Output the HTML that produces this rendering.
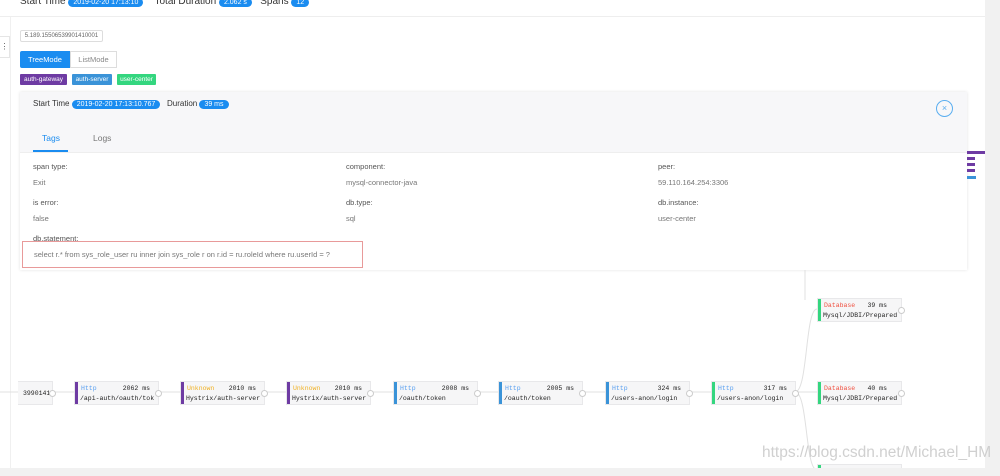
<!DOCTYPE html>
<html style="overflow:hidden;width:1000px;height:476px"><head><meta charset="utf-8"><style>
body{margin:0;width:1000px;height:476px;overflow:hidden;background:#fff;font-family:"Liberation Sans",sans-serif;position:relative;color:#333}
.a{position:absolute}
.pill{background:#1a8cf0;color:#fff;border-radius:8px;font-size:7px;padding:1px 5px}
.node{position:absolute;width:83px;height:22px;background:#f6f6f7;border:1px solid #e8e8ea;font-family:"Liberation Mono",monospace;font-size:6.5px}
.node .bar{position:absolute;left:0;top:0;width:3px;height:22px}
.node .t{position:absolute;left:6px;top:3px}
.node .ms{position:absolute;right:8px;top:3px;color:#222}
.node .p{position:absolute;left:5px;top:13px;color:#222}
.node .c{position:absolute;right:-4px;top:8px;width:5px;height:5px;border:1px solid #ccc;border-radius:50%;background:#fff}
.lbl{font-size:7.5px;color:#555}
.val{font-size:7.5px;color:#777}
</style></head><body>
<div class="a" style="left:0;top:0;width:985px;height:16px;border-bottom:1px solid #eee;background:#fff"></div>
<div class="a" style="left:20px;top:-4px;font-size:10px;color:#333;white-space:nowrap">Start Time <span class="pill">2019-02-20 17:13:10</span>&nbsp;&nbsp;&nbsp;&nbsp;Total Duration <span class="pill">2.062 s</span>&nbsp;&nbsp;&nbsp;Spans <span class="pill">12</span></div>
<div class="a" style="left:0;top:36px;width:9px;height:20px;border:1px solid #e5e5e5;border-left:none;background:#fff;font-size:8px;line-height:20px;text-align:center;color:#555">⋮</div>
<div class="a" style="left:10px;top:17px;width:1px;height:459px;background:#f0f0f0"></div>
<div class="a" style="left:0;top:468px;width:1000px;height:8px;background:#f1f1f1;z-index:5"></div>
<div class="a" style="left:985px;top:0;width:15px;height:476px;background:#f1f1f1;z-index:5"></div>
<div class="a" style="left:20px;top:30px;width:81px;height:10px;border:1px solid #ddd;border-radius:2px;font-size:6px;line-height:10px;text-align:center;color:#666">5.189.15506539901410001</div>
<div class="a" style="left:20px;top:51px;width:50px;height:17px;background:#1a8cf0;color:#fff;font-size:7.5px;line-height:17px;text-align:center;border-radius:2px 0 0 2px">TreeMode</div>
<div class="a" style="left:70px;top:51px;width:45px;height:15px;border:1px solid #ddd;color:#888;font-size:7.5px;line-height:15px;text-align:center">ListMode</div>
<div class="a" style="left:20px;top:74px;width:47px;height:11px;background:#6e3ba3;color:#fff;font-size:6.5px;line-height:11px;text-align:center;border-radius:1px">auth-gateway</div>
<div class="a" style="left:72px;top:74px;width:40px;height:11px;background:#3a93d8;color:#fff;font-size:6.5px;line-height:11px;text-align:center;border-radius:1px">auth-server</div>
<div class="a" style="left:117px;top:74px;width:39px;height:11px;background:#34d67f;color:#fff;font-size:6.5px;line-height:11px;text-align:center;border-radius:1px">user-center</div>
<div class="a" style="left:20px;top:92px;width:947px;height:178px;background:#fff;box-shadow:0 0 3px rgba(0,0,0,.12)"></div>
<div class="a" style="left:20px;top:92px;width:947px;height:60px;background:#f7f7f9;border-bottom:1px solid #eee"></div>
<div class="a" style="left:33px;top:99px;font-size:8px;white-space:nowrap">Start Time <span class="pill">2019-02-20 17:13:10.767</span>&nbsp;&nbsp;&nbsp;Duration <span class="pill">39 ms</span></div>
<div class="a" style="left:42px;top:133px;font-size:8.5px;color:#1a8cf0">Tags</div>
<div class="a" style="left:33px;top:150px;width:35px;height:2px;background:#1a8cf0"></div>
<div class="a" style="left:93px;top:133px;font-size:8.5px;color:#777">Logs</div>
<div class="a" style="left:936px;top:100px;width:15px;height:15px;border:1px solid #5aaef0;border-radius:50%;color:#5aaef0;font-size:9px;line-height:15px;text-align:center">×</div>
<div class="a lbl" style="left:33px;top:162px">span type:</div><div class="a val" style="left:33px;top:178px">Exit</div>
<div class="a lbl" style="left:33px;top:198px">is error:</div><div class="a val" style="left:33px;top:214px">false</div>
<div class="a lbl" style="left:33px;top:234px">db.statement:</div>
<div class="a lbl" style="left:346px;top:162px">component:</div><div class="a val" style="left:346px;top:178px">mysql-connector-java</div>
<div class="a lbl" style="left:346px;top:198px">db.type:</div><div class="a val" style="left:346px;top:214px">sql</div>
<div class="a lbl" style="left:658px;top:162px">peer:</div><div class="a val" style="left:658px;top:178px">59.110.164.254:3306</div>
<div class="a lbl" style="left:658px;top:198px">db.instance:</div><div class="a val" style="left:658px;top:214px">user-center</div>
<div class="a val" style="left:22px;top:241px;border:1px solid #e89a9a;line-height:25px;padding-left:11px;box-sizing:border-box;width:341px;height:27px;white-space:nowrap">select r.* from sys_role_user ru inner join sys_role r on r.id = ru.roleId where ru.userId = ?</div>
<div class="a" style="left:967px;top:151px;width:18px;height:3px;background:#6e3ba3"></div>
<div class="a" style="left:967px;top:157px;width:8px;height:3px;background:#6e3ba3"></div>
<div class="a" style="left:967px;top:163px;width:8px;height:3px;background:#6e3ba3"></div>
<div class="a" style="left:967px;top:169px;width:8px;height:3px;background:#6e3ba3"></div>
<div class="a" style="left:967px;top:176px;width:9px;height:3px;background:#3a93d8"></div>
<svg class="a" style="left:0;top:270px" width="985" height="200"><g stroke="#e0e0e0" fill="none">
<line x1="0" y1="122" x2="817" y2="122"/>
<path d="M795 122 C808 122 805 39 817 39"/><path d="M795 122 C808 122 805 200 817 200"/><path d="M805 0 L805 30"/></g></svg>
<div class="node" style="left:18px;top:381px;width:34px;border-left:none"><div class="p" style="top:8px">3990141</div><div class="c"></div></div>
<div class="node" style="left:74px;top:381px"><div class="bar" style="background:#6e3ba3"></div><div class="t" style="color:#5aa0f0">Http</div><div class="ms">2062 ms</div><div class="p">/api-auth/oauth/tok</div><div class="c"></div></div>
<div class="node" style="left:180px;top:381px"><div class="bar" style="background:#6e3ba3"></div><div class="t" style="color:#f0b020">Unknown</div><div class="ms">2010 ms</div><div class="p">Hystrix/auth-server</div><div class="c"></div></div>
<div class="node" style="left:286px;top:381px"><div class="bar" style="background:#6e3ba3"></div><div class="t" style="color:#f0b020">Unknown</div><div class="ms">2010 ms</div><div class="p">Hystrix/auth-server</div><div class="c"></div></div>
<div class="node" style="left:393px;top:381px"><div class="bar" style="background:#3a93d8"></div><div class="t" style="color:#5aa0f0">Http</div><div class="ms">2008 ms</div><div class="p">/oauth/token</div><div class="c"></div></div>
<div class="node" style="left:498px;top:381px"><div class="bar" style="background:#3a93d8"></div><div class="t" style="color:#5aa0f0">Http</div><div class="ms">2005 ms</div><div class="p">/oauth/token</div><div class="c"></div></div>
<div class="node" style="left:605px;top:381px"><div class="bar" style="background:#3a93d8"></div><div class="t" style="color:#5aa0f0">Http</div><div class="ms">324 ms</div><div class="p">/users-anon/login</div><div class="c"></div></div>
<div class="node" style="left:711px;top:381px"><div class="bar" style="background:#34d67f"></div><div class="t" style="color:#5aa0f0">Http</div><div class="ms">317 ms</div><div class="p">/users-anon/login</div><div class="c"></div></div>
<div class="node" style="left:817px;top:298px"><div class="bar" style="background:#34d67f"></div><div class="t" style="color:#f05040">Database</div><div class="ms" style="right:14px">39 ms</div><div class="p">Mysql/JDBI/Prepared</div><div class="c"></div></div>
<div class="node" style="left:817px;top:381px"><div class="bar" style="background:#34d67f"></div><div class="t" style="color:#f05040">Database</div><div class="ms" style="right:14px">40 ms</div><div class="p">Mysql/JDBI/Prepared</div><div class="c"></div></div>
<div class="node" style="left:817px;top:464px;height:4px;overflow:hidden"><div class="bar" style="background:#34d67f"></div><div class="t" style="color:#f05040">Database</div><div class="ms" style="right:14px">39 ms</div></div>
<div class="a" style="left:762px;top:444px;font-size:15.5px;color:rgba(200,200,200,.85);white-space:nowrap;z-index:6">https://blog.csdn.net/Michael_HM</div>
</body></html>
